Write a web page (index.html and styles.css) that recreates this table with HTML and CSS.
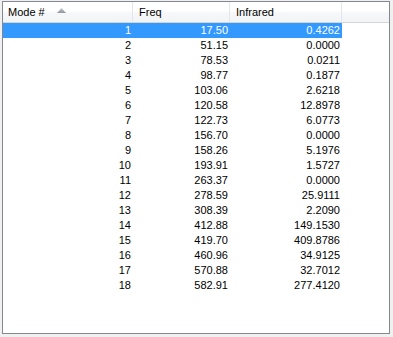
FILE: index.html
```html
<!DOCTYPE html>
<html>
<head>
<meta charset="utf-8">
<link rel="stylesheet" href="styles.css">
</head>
<body>
<div class="list">
  <div class="header">
    <div class="hcell c1">Mode #<svg class="sort" width="9" height="5" viewBox="0 0 9 5"><defs><linearGradient id="g" x1="0" y1="0" x2="0" y2="1"><stop offset="0" stop-color="#c4c9cf"/><stop offset="1" stop-color="#8f959c"/></linearGradient></defs><polygon points="4.5,0 9,5 0,5" fill="url(#g)"/></svg></div>
    <div class="hcell c2">Freq</div>
    <div class="hcell c3">Infrared</div>
    <div class="hcell fill"></div>
  </div>
  <div class="rows">
    <div class="row sel"><span class="cell c1">1</span><span class="cell c2">17.50</span><span class="cell c3">0.4262</span></div>
    <div class="row"><span class="cell c1">2</span><span class="cell c2">51.15</span><span class="cell c3">0.0000</span></div>
    <div class="row"><span class="cell c1">3</span><span class="cell c2">78.53</span><span class="cell c3">0.0211</span></div>
    <div class="row"><span class="cell c1">4</span><span class="cell c2">98.77</span><span class="cell c3">0.1877</span></div>
    <div class="row"><span class="cell c1">5</span><span class="cell c2">103.06</span><span class="cell c3">2.6218</span></div>
    <div class="row"><span class="cell c1">6</span><span class="cell c2">120.58</span><span class="cell c3">12.8978</span></div>
    <div class="row"><span class="cell c1">7</span><span class="cell c2">122.73</span><span class="cell c3">6.0773</span></div>
    <div class="row"><span class="cell c1">8</span><span class="cell c2">156.70</span><span class="cell c3">0.0000</span></div>
    <div class="row"><span class="cell c1">9</span><span class="cell c2">158.26</span><span class="cell c3">5.1976</span></div>
    <div class="row"><span class="cell c1">10</span><span class="cell c2">193.91</span><span class="cell c3">1.5727</span></div>
    <div class="row"><span class="cell c1">11</span><span class="cell c2">263.37</span><span class="cell c3">0.0000</span></div>
    <div class="row"><span class="cell c1">12</span><span class="cell c2">278.59</span><span class="cell c3">25.9111</span></div>
    <div class="row"><span class="cell c1">13</span><span class="cell c2">308.39</span><span class="cell c3">2.2090</span></div>
    <div class="row"><span class="cell c1">14</span><span class="cell c2">412.88</span><span class="cell c3">149.1530</span></div>
    <div class="row"><span class="cell c1">15</span><span class="cell c2">419.70</span><span class="cell c3">409.8786</span></div>
    <div class="row"><span class="cell c1">16</span><span class="cell c2">460.96</span><span class="cell c3">34.9125</span></div>
    <div class="row"><span class="cell c1">17</span><span class="cell c2">570.88</span><span class="cell c3">32.7012</span></div>
    <div class="row"><span class="cell c1">18</span><span class="cell c2">582.91</span><span class="cell c3">277.4120</span></div>
  </div>
</div>
</body>
</html>
```
FILE: styles.css
```css
html, body {
  margin: 0;
  padding: 0;
  background: #f0f0f0;
}
body {
  padding: 1px 0 0 2px;
  font-family: "Liberation Sans", Arial, sans-serif;
  font-size: 11px;
  color: #000;
}
.list {
  box-sizing: border-box;
  width: 388px;
  height: 333px;
  border: 1px solid #828790;
  background: #fff;
  overflow: hidden;
}
.header {
  display: flex;
  height: 20px;
  border-bottom: 1px solid #d5d5d5;
  background: linear-gradient(to bottom, #ffffff 0%, #ffffff 45%, #f6f7f9 55%, #f3f4f6 100%);
}
.hcell {
  box-sizing: border-box;
  height: 20px;
  line-height: 20px;
  padding-left: 5px;
  border-right: 1px solid #e3e6ea;
  display: flex;
  align-items: center;
  white-space: nowrap;
}
.hcell.fill {
  flex: 1;
  border-right: none;
}
.c1 { width: 130px; }
.c2 { width: 97px; }
.c3 { width: 112px; }
.hcell.c2, .hcell.c3 { padding-left: 6px; }
.sort {
  margin-left: 12px;
  margin-top: -3px;
}
.rows {
  display: flex;
  flex-direction: column;
}
.row {
  display: flex;
  height: 15px;
  line-height: 15px;
  width: 339px;
}
.row.sel {
  background: #3399ff;
  color: #fff;
}
.cell {
  box-sizing: border-box;
  text-align: right;
  padding-right: 2px;
  white-space: nowrap;
}
```
